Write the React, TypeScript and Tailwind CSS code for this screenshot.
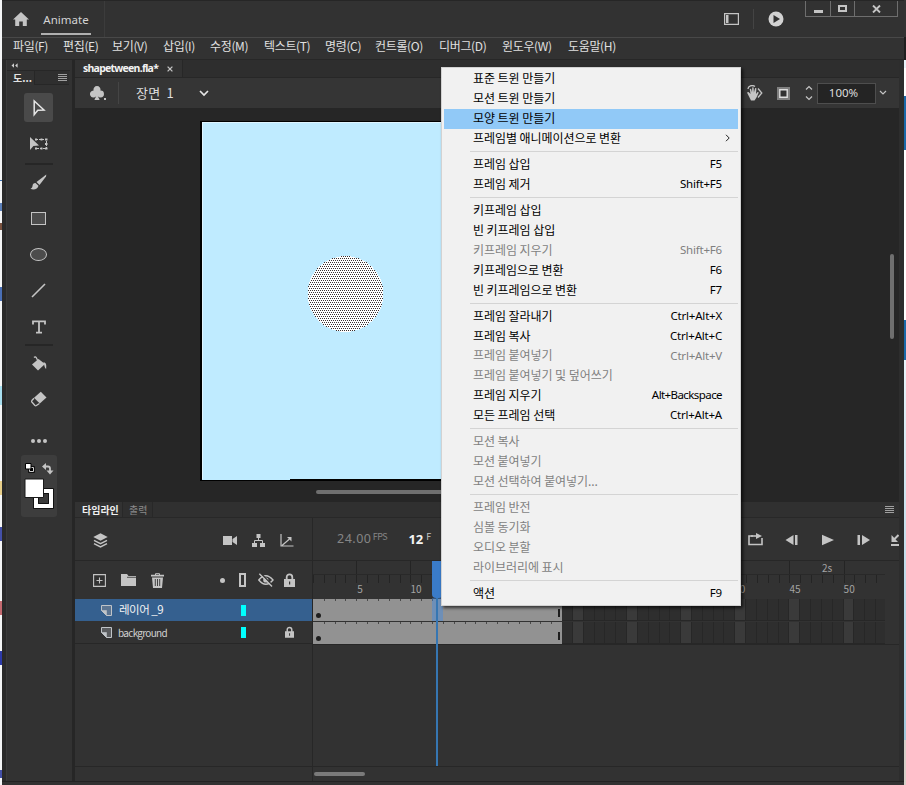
import React from "react";
import { BsSuitClubFill } from "react-icons/bs";

const menus: [string, string][] = [
  ["파일(F)", "w-[50px]"],
  ["편집(E)", "w-[49px]"],
  ["보기(V)", "w-[51px]"],
  ["삽입(I)", "w-[47px]"],
  ["수정(M)", "w-[54px]"],
  ["텍스트(T)", "w-[61px]"],
  ["명령(C)", "w-[50px]"],
  ["컨트롤(O)", "w-[64px]"],
  ["디버그(D)", "w-[63px]"],
  ["윈도우(W)", "w-[66px]"],
  ["도움말(H)", "w-[60px]"],
];

type Item = { t: string; k?: string; off?: boolean; hot?: boolean; sub?: boolean };

const groups: Item[][] = [
  [
    { t: "표준 트윈 만들기" },
    { t: "모션 트윈 만들기" },
    { t: "모양 트윈 만들기", hot: true },
    { t: "프레임별 애니메이션으로 변환", sub: true },
  ],
  [
    { t: "프레임 삽입", k: "F5" },
    { t: "프레임 제거", k: "Shift+F5" },
  ],
  [
    { t: "키프레임 삽입" },
    { t: "빈 키프레임 삽입" },
    { t: "키프레임 지우기", k: "Shift+F6", off: true },
    { t: "키프레임으로 변환", k: "F6" },
    { t: "빈 키프레임으로 변환", k: "F7" },
  ],
  [
    { t: "프레임 잘라내기", k: "Ctrl+Alt+X" },
    { t: "프레임 복사", k: "Ctrl+Alt+C" },
    { t: "프레임 붙여넣기", k: "Ctrl+Alt+V", off: true },
    { t: "프레임 붙여넣기 및 덮어쓰기", off: true },
    { t: "프레임 지우기", k: "Alt+Backspace" },
    { t: "모든 프레임 선택", k: "Ctrl+Alt+A" },
  ],
  [
    { t: "모션 복사", off: true },
    { t: "모션 붙여넣기", off: true },
    { t: "모션 선택하여 붙여넣기...", off: true },
  ],
  [
    { t: "프레임 반전", off: true },
    { t: "심볼 동기화", off: true },
    { t: "오디오 분할", off: true },
    { t: "라이브러리에 표시", off: true },
  ],
  [{ t: "액션", k: "F9" }],
];

const frames = Array.from({ length: 53 }, (_, i) => i + 1);
const labelled = [5, 10, 40, 45, 50];

function Svg({ w, h, className = "", children }: { w: number; h: number; className?: string; children: React.ReactNode }) {
  return (
    <svg width={w} height={h} viewBox={`0 0 ${w} ${h}`} fill="none" className={`shrink-0 ${className}`}>
      {children}
    </svg>
  );
}

const C = "#c4c4c4";

function Grip() {
  return (
    <div className="flex h-[7px] w-[9px] shrink-0 flex-col justify-between">
      <div className="h-px bg-[#a0a0a0]" />
      <div className="h-px bg-[#a0a0a0]" />
      <div className="h-px bg-[#a0a0a0]" />
      <div className="h-px bg-[#a0a0a0]" />
    </div>
  );
}

function Lock({ w, h }: { w: number; h: number }) {
  return (
    <svg width={w} height={h} viewBox="0 0 11 14" fill="none" className="shrink-0">
      <path d="M2.7 7V4.2a2.8 2.8 0 0 1 5.6 0V7" stroke={C} strokeWidth="1.8" />
      <path d="M0 6h11v8H0zM5 8.5v3h1.2v-3z" fill={C} fillRule="evenodd" />
    </svg>
  );
}

function LayerIcon() {
  return (
    <Svg w={11} h={11}>
      <path d="M.5.5h10v10H5.500L.5 5.500z" stroke="#c0c4c8" fill="#8b9096" fillOpacity=".45" />
      <path d="M.5 5.500h5v5z" fill="#c0c4c8" stroke="#c0c4c8" strokeWidth=".6" />
    </Svg>
  );
}

function Tools() {
  return (
    <div className="flex w-[65px] shrink-0 flex-col items-center pr-[2px]">
      <div className="flex h-[10px] w-full items-center pl-[4px]">
        <Svg w={7} h={5}>
          <path d="M3 .3v4.400L.5 2.500zM6.600.3v4.400L4.100 2.500z" fill="#cfcfcf" />
        </Svg>
      </div>
      <div className="flex h-[15px] w-full items-center justify-between border-t border-[#272727] pr-[1px] pl-[6px]">
        <span className="text-[10px] leading-none font-bold text-[#e2e2e2]">도...</span>
        <div className="flex h-full w-[35px] items-center justify-end border-b border-l border-[#272727] bg-[#2f2f2f] pr-[2px]">
          <Grip />
        </div>
      </div>
      <div className="mt-[8px] flex h-[29px] w-[29px] items-center justify-center rounded-[3px] bg-[#4a4a4a]">
        <Svg w={14} h={18}>
          <path d="M2.200 2v13.600l3.600-4.300 6.200-.3z" stroke="#e6e6e6" strokeWidth="1.500" />
        </Svg>
      </div>
      <div className="mt-[14px] flex h-[16px] items-center">
        <Svg w={18} h={16}>
          <path d="M0 1v13l3.400-4L9 9.500z" fill={C} />
          <path d="M6 3.500h10.500v9H6" stroke={C} strokeDasharray="2 1" />
          <path d="M5 2.500h2v2H5zM10.500 2.500h2v2h-2zM15 2.500h2.500v2H15zM15 7h2.500v2H15zM15 11.500h2.500v2H15zM10.500 11.500h2v2h-2zM5 11.500h2v2H5z" fill={C} />
        </Svg>
      </div>
      <div className="mt-[11px] h-[2px] w-[28px] bg-[#262626]" />
      <div className="mt-[8px] flex h-[18px] items-center">
        <Svg w={17} h={17}>
          <path d="M16.300.6 6.500 8l3 3L16 2.500z" fill={C} />
          <path d="M5.500 9c-2 0-2.800 1.300-3 3-.2 1.500-.8 2.200-2 2.800 2.800 1.300 7.500.6 8-3z" fill={C} />
        </Svg>
      </div>
      <div className="mt-[21px] h-[13px] w-[15px] border border-[#c4c4c4] bg-[#4c4c4c]" />
      <div className="mt-[23px] h-[13px] w-[17px] rounded-[50%] border border-[#c4c4c4] bg-[#4c4c4c]" />
      <div className="mt-[22px]">
        <Svg w={15} h={15}>
          <path d="M1 14 14 1" stroke={C} strokeWidth="1.600" />
        </Svg>
      </div>
      <div className="mt-[20px] h-[17px]">
        <Svg w={14} h={14} className="mt-[2px]">
          <path d="M1 4.500V1.400h12v3.100M7 1.400v11.200M4 12.600h6" stroke={C} strokeWidth="1.800" />
        </Svg>
      </div>
      <div className="mt-[9px] h-[2px] w-[28px] bg-[#262626]" />
      <div className="mt-[10px]">
        <Svg w={16} h={15}>
          <path d="M1 8.500 7.500 3 14 8l-7 6.500z" fill={C} />
          <path d="M3 1.500C5-.5 6 3 8 8" stroke={C} strokeWidth="1.300" />
          <path d="M12.500 6c3 1 3 3 2.600 7-1.500-1.300-1.600-3-2.100-5z" fill={C} />
        </Svg>
      </div>
      <div className="mt-[20px]">
        <Svg w={16} h={16}>
          <path d="M9.800.700 15.500 6.500 8.800 12.600 3 6.800z" fill={C} />
          <path d="M3 7.200.900 9.500c-.4.600-.4 1 0 1.500l3 3.500c.5.400 1 .4 1.500 0L8.400 12.500" stroke={C} strokeWidth="1.300" />
        </Svg>
      </div>
      <div className="mt-[32px] flex gap-[2px]">
        <div className="h-[4px] w-[4px] rounded-full bg-[#c4c4c4]" />
        <div className="h-[4px] w-[4px] rounded-full bg-[#c4c4c4]" />
        <div className="h-[4px] w-[4px] rounded-full bg-[#c4c4c4]" />
      </div>
      <div className="mt-[12px] h-[62px] w-[36px] rounded-[3px] bg-[#3d3d3d]">
        <Svg w={36} h={62}>
          <path d="M8.500 12.500h4v4h-4z" fill="#000" stroke="#000" strokeWidth="2.500" />
          <path d="M8.500 12.500h4v4h-4z" fill="#000" stroke="#d0d0d0" strokeWidth="1" />
          <path d="M4.500 8.500h5.500v5.500H4.500z" fill="#fff" stroke="#000" />
          <path d="M24.500 11.500h2.500q2 0 2 2V16" stroke={C} strokeWidth="1.800" />
          <path d="M25 8v7l-4-3.500zM25.500 15.500h7L29 19.500z" fill={C} />
          <path d="M15 36h15v15H15z" fill="#3a3a3a" stroke="#fff" strokeWidth="4" />
          <path d="M17.500 38.500h10v10h-10zM12.500 33.500h20v20h-20z" stroke="#111" />
          <path d="M4 24h18.500v18.500H4z" fill="#fff" stroke="#1a1a1a" />
        </Svg>
      </div>
    </div>
  );
}

function Ruler() {
  return (
    <div className="flex h-[38px] w-[572px] shrink-0 overflow-hidden text-[10px] text-[#a3a3a3]">
      {frames.map((n) => (
        <div key={n} className="relative h-full w-[10.830px] shrink-0">
          {n % 5 === 0 && <div className="absolute top-0 left-0 h-[14px] w-px bg-[#242424]" />}
          <div className="absolute top-[13px] left-0 h-px w-full bg-[#292929]" />
          <div className="absolute top-[14px] left-0 h-[8px] w-px bg-[#242424]" />
          {labelled.includes(n) && (
            <span className={`absolute top-[21px] leading-[14px] ${n === 5 ? "left-[1px]" : n === 40 ? "-left-px" : "left-0"}`}>{n}</span>
          )}
          {n === 48 && <span className="absolute top-0 left-0 leading-[14px]">2s</span>}
        </div>
      ))}
    </div>
  );
}

function FrameRow() {
  return (
    <div className="flex h-[22px] w-[572px] shrink-0 overflow-hidden">
      {frames.map((n) =>
        n <= 23 ? (
          <div key={n} className="relative h-full w-[10.830px] shrink-0 bg-[#929292]">
            {n > 1 && <div className="absolute top-0 left-0 h-[2px] w-px bg-[#4a4a4a]" />}
            {n === 1 && <div className="absolute bottom-[3px] left-[3px] h-[5px] w-[5px] rounded-full bg-[#1e1e1e]" />}
            {n === 23 && <div className="absolute right-[2px] bottom-[4px] h-[8px] w-[2px] bg-[#1e1e1e]" />}
          </div>
        ) : (
          <div
            key={n}
            className={`h-full w-[10.830px] shrink-0 border-r border-b border-[#272727] ${n % 5 === 0 ? "bg-[#3a3a3a]" : "bg-[#2e2e2e]"}`}
          />
        ),
      )}
    </div>
  );
}

function Timeline() {
  return (
    <div className="flex h-[279px] shrink-0 flex-col bg-[#323232]">
      <div className="flex h-[16px] shrink-0 border-b border-[#282828] text-[10px] leading-[15px]">
        <div className="w-[48px] border-r border-[#282828] pl-[7px] font-bold whitespace-nowrap text-[#f0f0f0]">타임라인</div>
        <div className="w-[30px] border-r border-[#282828] bg-[#2f2f2f] pl-[6px] text-[#8a8a8a]">출력</div>
        <div className="flex grow items-center justify-end bg-[#303030] pr-[5px]">
          <Grip />
        </div>
      </div>
      <div className="flex h-[248px] shrink-0">
        <div className="flex w-[238px] shrink-0 flex-col border-r border-[#272727]">
          <div className="flex h-[43px] shrink-0 items-center border-b border-[#272727] pt-[2px] pl-[18px]">
            <Svg w={15} h={15}>
              <path d="M7.500.3 14.700 4 7.500 7.700.300 4z" fill={C} />
              <path d="M1 7.400 7.500 10.700 14 7.400M1 10.600l6.500 3.400 6.500-3.400" stroke={C} strokeWidth="1.500" />
            </Svg>
            <Svg w={14} h={11} className="ml-[115px]">
              <path d="M0 1h9v9H0zM9.500 4 14 1v9L9.500 7z" fill={C} />
            </Svg>
            <Svg w={13} h={13} className="ml-[15px]">
              <path d="M4.500 0h4v4h-4zM0 9h5v4H0zM8 9h5v4H8z" fill={C} />
              <path d="M6.500 4v2.500M2.500 9V6.500h8V9" stroke={C} />
            </Svg>
            <Svg w={14} h={14} className="ml-[15px]">
              <path d="M1 1v12h12.500M2 12.500 9.500 6" stroke={C} strokeWidth="1.200" />
              <path d="M7 4h4.500v4.500z" fill={C} />
            </Svg>
          </div>
          <div className="flex h-[38px] shrink-0 items-center pl-[18px]">
            <Svg w={13} h={13}>
              <path d="M.6.6h11.800v11.800H.6zM6.500 3.500v6M3.500 6.500h6" stroke={C} strokeWidth="1.100" />
            </Svg>
            <Svg w={15} h={12} className="ml-[15px]">
              <path d="M0 0h6l1.500 2H15v10H0z" fill={C} />
              <path d="M6 3.300h9" stroke="#323232" strokeWidth=".8" />
            </Svg>
            <Svg w={13} h={15} className="ml-[15px]">
              <path d="M4.500 2V.700h4V2" stroke={C} />
              <path d="M0 1.800h13v1.700H0zM1 4.500h11L11 15H2z" fill={C} />
              <path d="M4.300 6v7M6.500 6v7M8.700 6v7" stroke="#323232" strokeWidth=".9" />
            </Svg>
            <div className="ml-[56px] h-[5px] w-[5px] rounded-full bg-[#c4c4c4]" />
            <div className="ml-[14px] h-[14px] w-[7px] border-2 border-[#c4c4c4]" />
            <Svg w={16} h={14} className="ml-[12px]">
              <path d="M.800 7Q7.800-1.500 15 7 7.800 15.500.800 7z" stroke={C} strokeWidth="1.400" />
              <circle cx="7.800" cy="7" r="2.600" fill={C} />
              <path d="M2.500 0 15 13" stroke="#323232" strokeWidth="1.500" />
              <path d="M1.300.8 14 13.500" stroke={C} strokeWidth="1.400" />
            </Svg>
            <div className="ml-[10px]">
              <Lock w={11} h={14} />
            </div>
          </div>
          <div className="flex h-[22px] shrink-0 items-center bg-[#35608f] pl-[26px] text-[#f2f2f2]">
            <LayerIcon />
            <span className="ml-[7px] w-[120px] text-[11.500px] tracking-[-0.500px]">레이어 _9</span>
            <div className="ml-[2px] h-[11px] w-[5px] bg-[#00ffff]" />
          </div>
          <div className="flex h-[23px] shrink-0 items-center border-b border-[#272727] pl-[26px] text-[#d0d0d0]">
            <LayerIcon />
            <span className="ml-[6px] w-[123px] text-[10px] tracking-[-0.700px]">background</span>
            <div className="h-[11px] w-[5px] bg-[#00ffff]" />
            <div className="ml-[39px]">
              <Lock w={9} h={12} />
            </div>
          </div>
        </div>
        <div className="relative flex grow flex-col overflow-hidden">
          <div className="flex h-[43px] shrink-0 items-center border-b border-[#272727] pt-[1px]">
            <span className="ml-[24px] w-[36px] font-['Noto_Sans',sans-serif] text-[12.500px] tracking-[0.500px] text-[#858585]">24.00</span>
            <span className="w-[36px] pb-[6px] text-[9px] tracking-[-0.500px] text-[#858585]">FPS</span>
            <span className="w-[18px] font-['Noto_Sans',sans-serif] text-[13px] font-bold text-[#f4f4f4]">12</span>
            <span className="w-[30px] pb-[6px] text-[9px] text-[#c4c4c4]">F</span>
            <Svg w={15} h={13} className="ml-[292px]">
              <path d="M5 3H1v8.500h13V5" stroke={C} strokeWidth="1.600" />
              <path d="M3 3h6" stroke={C} strokeWidth="1.600" />
              <path d="M8 0l6 3-6 3z" fill={C} />
            </Svg>
            <Svg w={13} h={12} className="ml-[22px]">
              <path d="M8.500 1v10L.500 6zM10 1h2.500v10H10z" fill={C} />
            </Svg>
            <Svg w={12} h={12} className="ml-[24px]">
              <path d="M0 .8 12 6 0 11.200z" fill={C} />
            </Svg>
            <Svg w={13} h={12} className="ml-[23px]">
              <path d="M.500 1H3v10H.500zM5 1v10l8-5z" fill={C} />
            </Svg>
            <Svg w={8} h={12} className="ml-[21px]">
              <path d="M0 11h8M7.500 1 3 5.500" stroke={C} strokeWidth="2" />
              <path d="M.500 1v7h6.500z" fill={C} />
            </Svg>
          </div>
          <Ruler />
          <FrameRow />
          <div className="h-px shrink-0" />
          <FrameRow />
          <div className="h-px shrink-0 bg-[#272727]" />
          <div className="absolute top-[43px] left-[119px] h-[37px] w-[11px] rounded-b-[4px] bg-[#3a7bc8]" />
          <div className="absolute top-[80px] left-[119px] h-[23px] w-[11px] bg-[#3a8bf0]/40" />
          <div className="absolute top-[80px] left-[123px] h-[168px] w-[2px] bg-[#3676b2]" />
        </div>
      </div>
      <div className="flex grow border-t border-[#272727]">
        <div className="w-[238px] border-r border-[#272727]" />
        <div className="mt-[5px] ml-px h-[4px] w-[51px] rounded-full bg-[#7a7a7a]" />
      </div>
    </div>
  );
}

function Stage() {
  return (
    <div className="relative h-[394px] shrink-0 overflow-hidden bg-[#262626]">
      <div className="absolute top-[13px] left-[125px] h-[360px] w-[400px] border-2 border-t-[1px] border-black bg-[#bfebff]">
        <div className="h-full border-t border-l border-[#dff5ff]" />
        <div className="absolute -bottom-[1px] left-0 h-px w-[88px] bg-[#bfebff]" />
      </div>
      <div className="absolute top-[148px] left-[232px]">
        <Svg w={77} h={77}>
          <defs>
            <pattern id="dots" width="4" height="4" patternUnits="userSpaceOnUse">
              <path d="M0 0h4v4H0z" fill="#fff" />
              <path d="M0 0h1v1H0zM2 0h1v1H2zM1 2h1v1H1zM3 2h1v1H3z" fill="#3c3030" />
            </pattern>
          </defs>
          <circle cx="38.500" cy="38" r="38" fill="url(#dots)" shapeRendering="crispEdges" />
        </Svg>
      </div>
      <div className="absolute top-[382px] left-[241px] h-[4px] w-[300px] rounded-full bg-[#6f6f6f]" />
      <div className="absolute top-[146px] right-[5px] h-[85px] w-[4px] rounded-full bg-[#6f6f6f]" />
    </div>
  );
}

function ContextMenu() {
  return (
    <div className="absolute top-[67px] left-[441px] h-[539px] w-[300px] border border-[#d2d2d2] bg-[#f1f1f1] px-[2px] pt-[1px] font-['Noto_Sans_CJK_KR',sans-serif] text-[12px] text-black shadow-[2px_2px_3px_rgba(0,0,0,0.65)]">
      {groups.map((g, i) => (
        <React.Fragment key={i}>
          {i > 0 && (
            <div className="flex h-[6.300px] items-center pl-[26px]">
              <div className="h-px w-full bg-[#d4d4d4]" />
            </div>
          )}
          {g.map((m) => (
            <div
              key={m.t}
              className={`flex h-[19.880px] items-center justify-between pr-[16px] pb-[1.500px] pl-[29px] ${m.hot ? "bg-[#91c9f7]" : ""} ${m.off ? "text-[#7f7f7f]" : ""}`}
            >
              <span className="leading-none tracking-[-0.060px] whitespace-nowrap">{m.t}</span>
              {m.k && (
                <span
                  className={`font-['Noto_Sans',sans-serif] text-[11.500px] leading-none ${m.k === "Alt+Backspace" ? "tracking-[-0.580px]" : "tracking-[-0.200px]"}`}
                >
                  {m.k}
                </span>
              )}
              {m.sub && (
                <Svg w={5} h={8} className="-mr-[8px]">
                  <path d="M1 .8 4.200 4 1 7.200" stroke="#222" />
                </Svg>
              )}
            </div>
          ))}
        </React.Fragment>
      ))}
    </div>
  );
}

export default function App() {
  return (
    <div className="relative flex h-[785px] w-[906px] overflow-hidden bg-[#2a2a2a] font-['Noto_Sans_CJK_KR',sans-serif]">
      <div className="flex w-[2px] shrink-0 flex-col bg-[#f4f5f6]">
        <div className="mt-[180px] h-px bg-[#3b6fb0]" />
        <div className="mt-[22px] h-[8px] bg-[#5b7fb8]" />
        <div className="mt-[12px] h-[7px] bg-[#7b5340]" />
        <div className="mt-[57px] h-[14px] bg-[#4a6fb5]" />
        <div className="mt-[85px] h-[19px] bg-[#a8dff0]" />
        <div className="mt-[76px] h-[14px] bg-[#e8cf8a]" />
        <div className="mt-[32px] h-[14px] bg-[#4450a8]" />
        <div className="mt-[60px] h-[14px] bg-[#c46a70]" />
        <div className="mt-[36px] h-[14px] bg-[#2d3aa8]" />
        <div className="mt-[105px] h-[8px] bg-[#4450a8]" />
      </div>
      <div className="flex w-[902px] shrink-0 flex-col bg-[#323232]">
        <div className="flex h-[38px] shrink-0 border-t border-b border-t-[#262626] border-b-[#484848]">
          <div className="flex w-[103px] items-center border-r border-[#3c3c3c] pl-[11px]">
            <Svg w={16} h={14}>
              <path d="M8 0 16 7.500h-2.200V14H9.800V9.500H6.200V14H2.200V7.500H0z" fill={C} />
            </Svg>
            <div className="ml-[12px] flex h-full w-[50px] flex-col items-center justify-end pb-[2px]">
              <span className="mb-[6px] font-['Noto_Sans',sans-serif] text-[11.500px] leading-[14px] text-[#d4d4d4]">Animate</span>
              <div className="h-[2px] w-full bg-[#b0b0b0]" />
            </div>
          </div>
          <div className="flex grow items-center justify-end">
            <Svg w={15} h={12}>
              <path d="M.600.600h13.800v10.800H.600z" stroke={C} strokeWidth="1.200" />
              <path d="M2 2h2.500v8H2z" fill={C} />
            </Svg>
            <div className="ml-[14px] h-[20px] w-px bg-[#444]" />
            <Svg w={16} h={16} className="ml-[14px]">
              <circle cx="8" cy="8" r="7.500" fill="#d2d2d2" />
              <path d="M5.500 4v8l6.500-4z" fill="#323232" />
            </Svg>
          </div>
          <div className="mr-[6px] ml-[21px] flex h-[16px] w-[93px] items-center border border-t-0 border-[#6e6e6e]">
            <div className="flex h-full w-[25px] items-center justify-center border-r border-[#6e6e6e] pt-[5px]">
              <div className="h-[3px] w-[9px] bg-[#c4c4c4]" />
            </div>
            <div className="flex h-full w-[24px] items-center justify-center border-r border-[#6e6e6e]">
              <div className="h-[7px] w-[9px] border-2 border-[#c4c4c4]" />
            </div>
            <div className="flex grow items-center justify-center">
              <Svg w={9} h={8}>
                <path d="M1 .5 8 7.500M8 .5 1 7.500" stroke={C} strokeWidth="1.900" />
              </Svg>
            </div>
          </div>
        </div>
        <div className="flex h-[22px] shrink-0 items-center border-b border-[#272727] pb-[6px] pl-[11px] text-[12px] text-[#e0e0e0]">
          {menus.map(([t, w]) => (
            <span key={t} className={`${w} shrink-0 tracking-[-0.350px] whitespace-nowrap`}>{t}</span>
          ))}
        </div>
        <div className="flex h-[722px] shrink-0 border-b border-[#232323]">
          <div className="w-[5px] shrink-0 border-r border-[#3a3a3a] bg-[#2a2a2a]" />
          <Tools />
          <div className="w-[3px] shrink-0 bg-[#262626]" />
          <div className="flex w-[824px] shrink-0 flex-col">
            <div className="flex h-[18px] shrink-0 border-b border-[#272727] bg-[#2e2e2e]">
              <div className="flex w-[108px] items-center border-r border-[#272727] bg-[#323232] pl-[8px]">
                <span className="w-[84px] font-['Noto_Sans',sans-serif] text-[10.500px] leading-none font-bold tracking-[-0.750px] text-[#f2f2f2]">shapetween.fla*</span>
                <Svg w={6} h={6}>
                  <path d="M.600.600 5.400 5.400M5.400.600.600 5.400" stroke={C} strokeWidth="1.300" />
                </Svg>
              </div>
            </div>
            <div className="flex h-[30px] shrink-0 items-center bg-[#353535] text-[#dedede]">
              <BsSuitClubFill className="ml-[14px] h-[16px] w-[16px] text-[#c4c4c4]" />
              <div className="mt-[11px] -ml-px h-[2px] w-[2px] bg-[#c4c4c4]" />
              <div className="ml-[12px] h-[22px] w-px bg-[#454545]" />
              <span className="ml-[17px] w-[63px] text-[13px] tracking-[0.200px] [word-spacing:3px]">장면 1</span>
              <Svg w={10} h={7}>
                <path d="M1 1l4 4 4-4" stroke="#e6e6e6" strokeWidth="1.700" />
              </Svg>
              <Svg w={17} h={16} className="ml-[537px]">
                <path d="M1 7.500 2.500 7 4.500 9 3.800 4 5 3.800l1 3.500.300-5 1.300.100.300 5L9.200 3l1.200.300L10 9l1.500-2 1.300.500-2.300 5-2 3H5z" fill={C} />
                <path d="M12 3.500 15.800 8 12 12.500M2 4C2 1 6-.5 9 1.500" stroke={C} strokeWidth="1.300" />
              </Svg>
              <Svg w={13} h={13} className="ml-[14px]">
                <path d="M0 0h13v13H0z" fill="#808080" />
                <path d="M2.800 2.800h7.400v7.400H2.800z" fill="#323232" stroke="#dedede" strokeWidth="1.400" />
              </Svg>
              <Svg w={8} h={16} className="ml-[15px]">
                <path d="M1 4.500l3-3 3 3M1 11.500l3 3 3-3" stroke={C} strokeWidth="1.200" />
              </Svg>
              <div className="ml-[4px] flex h-[21px] w-[59px] items-center justify-center border border-[#4e4e4e] bg-[#242424] pr-[6px] font-['Noto_Sans',sans-serif] text-[11.500px]">100%</div>
              <Svg w={8} h={6} className="ml-[3px]">
                <path d="M1 1l3 3 3-3" stroke={C} strokeWidth="1.200" />
              </Svg>
            </div>
            <Stage />
            <Timeline />
          </div>
          <div className="w-[5px] shrink-0 bg-[#2d2d2d]" />
        </div>
      </div>
      <div className="flex w-[2px] shrink-0 flex-col bg-[#bcdce9]">
        <div className="h-[37px] bg-[#333]" />
        <div className="h-[23px] bg-[#1f1f1f]" />
        <div className="h-[8px] bg-[#e8f3fa]" />
        <div className="h-[28px] bg-white" />
        <div className="h-[54px] bg-[#1a68a8]" />
        <div className="h-[170px] bg-white" />
        <div className="h-[40px] bg-[#1a68a8]" />
        <div className="h-[380px] bg-linear-to-b from-[#e8f4fa] to-[#a0c8dc]" />
        <div className="grow bg-[#d8cfc8]" />
      </div>
      <ContextMenu />
    </div>
  );
}
